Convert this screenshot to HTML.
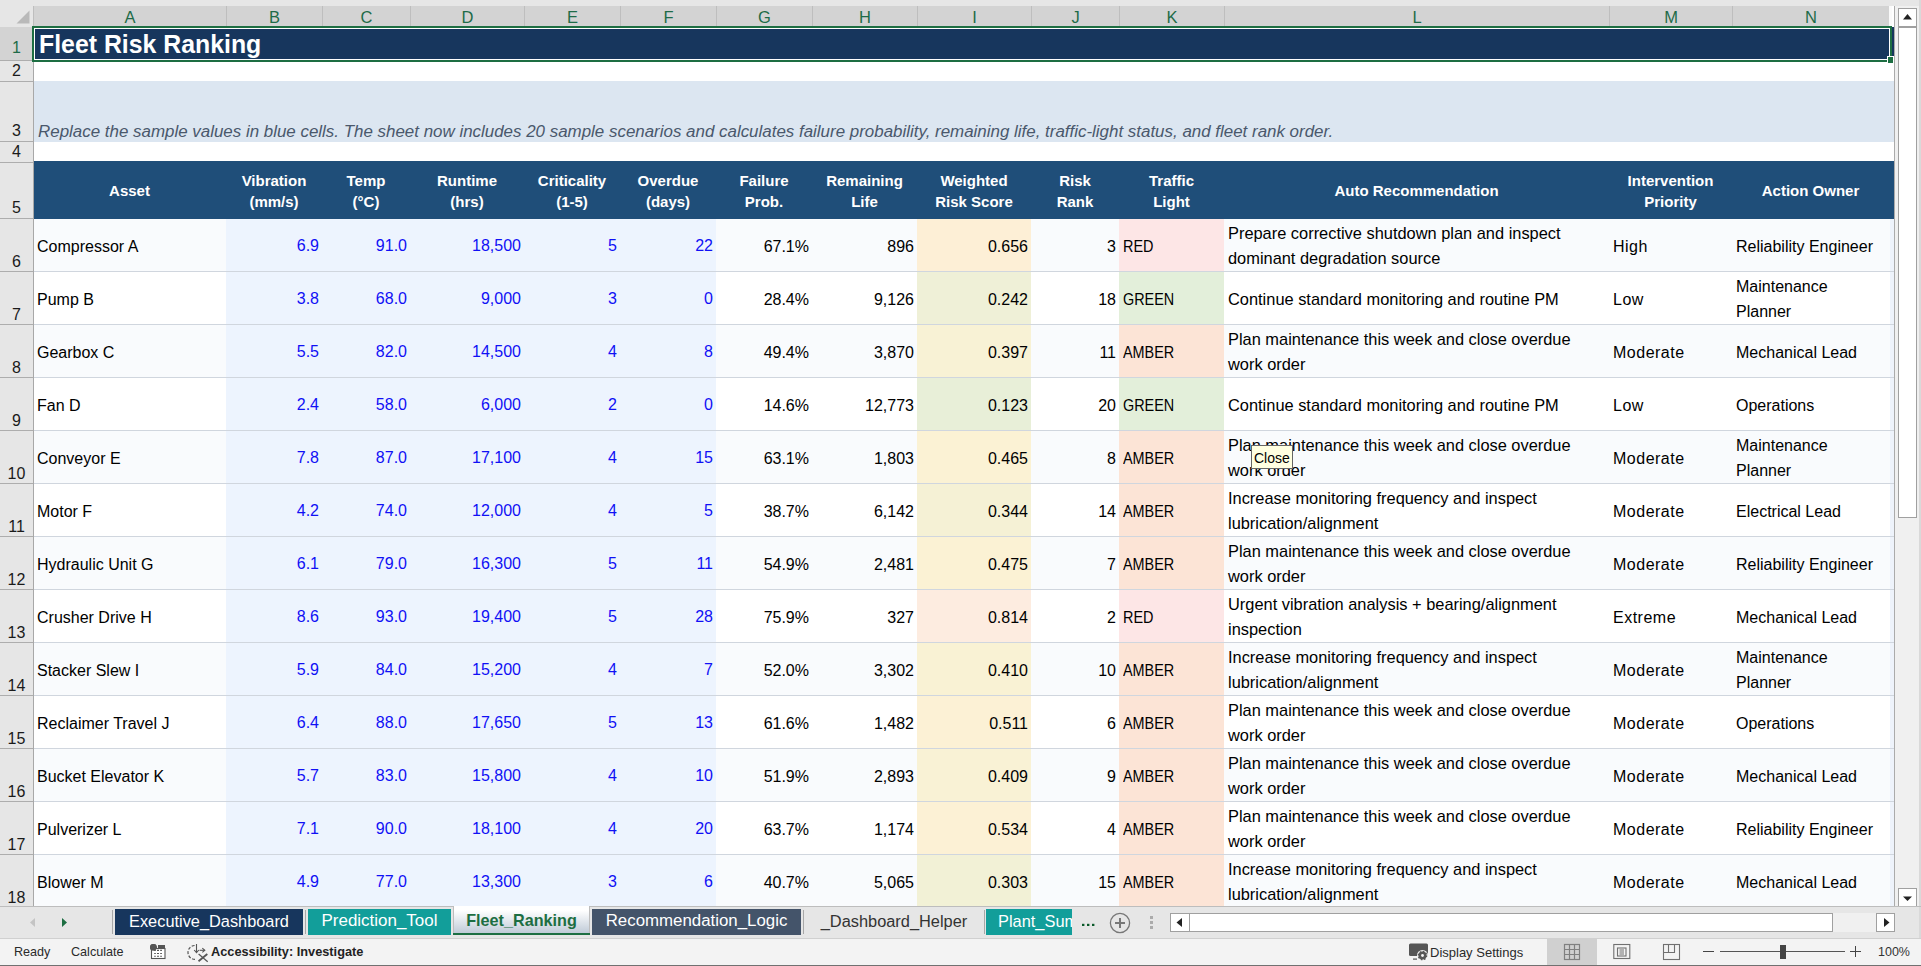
<!DOCTYPE html>
<html><head><meta charset="utf-8"><title>Fleet Risk Ranking</title>
<style>
*{margin:0;padding:0;box-sizing:border-box}
html,body{width:1921px;height:966px;overflow:hidden;background:#fff;font-family:"Liberation Sans",sans-serif}
.a{position:absolute}
.t{position:absolute;white-space:nowrap;line-height:1}
.ch{position:absolute;top:6px;height:20px;background:#D3D3D3;border-right:1px solid #BEBEBE;color:#1E6B48;font-size:16.5px;text-align:center;line-height:23px}
.rh{position:absolute;left:0;width:33px;background:#E6E6E6;border-bottom:1px solid #ADADAD}
</style></head><body>

<div class="a" style="left:0px;top:0px;width:1921px;height:6px;background:#E6E6E6;"></div>
<div class="a" style="left:0px;top:6px;width:33px;height:21px;background:#E6E6E6;"></div>
<svg class="a" style="left:0;top:0" width="33" height="27"><polygon points="29.5,10.5 29.5,23.5 16.5,23.5" fill="#B9B9B9"/></svg>
<div class="ch" style="left:34px;width:193px">A</div>
<div class="ch" style="left:227px;width:96px">B</div>
<div class="ch" style="left:323px;width:88px">C</div>
<div class="ch" style="left:411px;width:114px">D</div>
<div class="ch" style="left:525px;width:96px">E</div>
<div class="ch" style="left:621px;width:96px">F</div>
<div class="ch" style="left:717px;width:96px">G</div>
<div class="ch" style="left:813px;width:105px">H</div>
<div class="ch" style="left:918px;width:114px">I</div>
<div class="ch" style="left:1032px;width:88px">J</div>
<div class="ch" style="left:1120px;width:105px">K</div>
<div class="ch" style="left:1225px;width:385px">L</div>
<div class="ch" style="left:1610px;width:123px">M</div>
<div class="ch" style="left:1733px;width:157px">N</div>
<div class="a" style="left:33px;top:6px;width:1px;height:20px;background:#BEBEBE;"></div>
<div class="a" style="left:1889px;top:6px;width:3px;height:20px;background:#FAFAFA;"></div>
<div class="rh" style="top:27px;height:34px;background:#D3D3D3"></div>
<div class="t" style="left:0;width:33px;text-align:center;top:40px;font-size:16px;color:#1E6B48">1</div>
<div class="rh" style="top:61px;height:21px;background:#E6E6E6"></div>
<div class="t" style="left:0;width:33px;text-align:center;top:63px;font-size:16px;color:#1a1a1a">2</div>
<div class="rh" style="top:82px;height:60px;background:#E6E6E6"></div>
<div class="t" style="left:0;width:33px;text-align:center;top:123px;font-size:16px;color:#1a1a1a">3</div>
<div class="rh" style="top:142px;height:21px;background:#E6E6E6"></div>
<div class="t" style="left:0;width:33px;text-align:center;top:144px;font-size:16px;color:#1a1a1a">4</div>
<div class="rh" style="top:163px;height:56px;background:#E6E6E6"></div>
<div class="t" style="left:0;width:33px;text-align:center;top:200px;font-size:16px;color:#1a1a1a">5</div>
<div class="rh" style="top:219px;height:53px;background:#E6E6E6"></div>
<div class="t" style="left:0;width:33px;text-align:center;top:253.5px;font-size:16px;color:#1a1a1a">6</div>
<div class="rh" style="top:272px;height:53px;background:#E6E6E6"></div>
<div class="t" style="left:0;width:33px;text-align:center;top:306.5px;font-size:16px;color:#1a1a1a">7</div>
<div class="rh" style="top:325px;height:53px;background:#E6E6E6"></div>
<div class="t" style="left:0;width:33px;text-align:center;top:359.5px;font-size:16px;color:#1a1a1a">8</div>
<div class="rh" style="top:378px;height:53px;background:#E6E6E6"></div>
<div class="t" style="left:0;width:33px;text-align:center;top:412.5px;font-size:16px;color:#1a1a1a">9</div>
<div class="rh" style="top:431px;height:53px;background:#E6E6E6"></div>
<div class="t" style="left:0;width:33px;text-align:center;top:465.5px;font-size:16px;color:#1a1a1a">10</div>
<div class="rh" style="top:484px;height:53px;background:#E6E6E6"></div>
<div class="t" style="left:0;width:33px;text-align:center;top:518.5px;font-size:16px;color:#1a1a1a">11</div>
<div class="rh" style="top:537px;height:53px;background:#E6E6E6"></div>
<div class="t" style="left:0;width:33px;text-align:center;top:571.5px;font-size:16px;color:#1a1a1a">12</div>
<div class="rh" style="top:590px;height:53px;background:#E6E6E6"></div>
<div class="t" style="left:0;width:33px;text-align:center;top:624.5px;font-size:16px;color:#1a1a1a">13</div>
<div class="rh" style="top:643px;height:53px;background:#E6E6E6"></div>
<div class="t" style="left:0;width:33px;text-align:center;top:677.5px;font-size:16px;color:#1a1a1a">14</div>
<div class="rh" style="top:696px;height:53px;background:#E6E6E6"></div>
<div class="t" style="left:0;width:33px;text-align:center;top:730.5px;font-size:16px;color:#1a1a1a">15</div>
<div class="rh" style="top:749px;height:53px;background:#E6E6E6"></div>
<div class="t" style="left:0;width:33px;text-align:center;top:783.5px;font-size:16px;color:#1a1a1a">16</div>
<div class="rh" style="top:802px;height:53px;background:#E6E6E6"></div>
<div class="t" style="left:0;width:33px;text-align:center;top:836.5px;font-size:16px;color:#1a1a1a">17</div>
<div class="rh" style="top:855px;height:53px;background:#E6E6E6"></div>
<div class="t" style="left:0;width:33px;text-align:center;top:889.5px;font-size:16px;color:#1a1a1a">18</div>
<div class="a" style="left:33px;top:26px;width:1px;height:881px;background:#A8A8A8;"></div>
<div class="a" style="left:34px;top:26px;width:1860px;height:35px;background:#FFFFFF;"></div>
<div class="a" style="left:35px;top:29px;width:1854px;height:30px;background:#17365D;"></div>
<div class="a" style="left:1892px;top:27px;width:2px;height:34px;background:#17365D;"></div>
<div class="t" style="left:39px;top:33px;font-size:24.85px;font-weight:bold;color:#fff">Fleet Risk Ranking</div>
<div class="a" style="left:32px;top:26px;width:1860px;height:2px;background:#1D6E42;"></div>
<div class="a" style="left:32px;top:60px;width:1860px;height:2px;background:#1D6E42;"></div>
<div class="a" style="left:32px;top:26px;width:2px;height:36px;background:#1D6E42;"></div>
<div class="a" style="left:1890px;top:26px;width:2px;height:36px;background:#1D6E42;"></div>
<div class="a" style="left:1887px;top:56px;width:7px;height:7px;background:#FFFFFF;"></div>
<div class="a" style="left:1888px;top:57px;width:5px;height:6px;background:#1D6E42;"></div>
<div class="a" style="left:34px;top:81px;width:1860px;height:61px;background:#DCE6F1;"></div>
<div class="t" style="left:38px;top:124px;font-size:16.93px;font-style:italic;color:#4A586C">Replace the sample values in blue cells. The sheet now includes 20 sample scenarios and calculates failure probability, remaining life, traffic-light status, and fleet rank order.</div>
<div class="a" style="left:34px;top:161px;width:1860px;height:58px;background:#1F4E79;"></div>
<div class="t" style="left:33px;width:193px;text-align:center;top:183px;font-size:15px;font-weight:bold;color:#fff">Asset</div>
<div class="t" style="left:226px;width:96px;text-align:center;top:173px;font-size:15px;font-weight:bold;color:#fff">Vibration</div>
<div class="t" style="left:226px;width:96px;text-align:center;top:194px;font-size:15px;font-weight:bold;color:#fff">(mm/s)</div>
<div class="t" style="left:322px;width:88px;text-align:center;top:173px;font-size:15px;font-weight:bold;color:#fff">Temp</div>
<div class="t" style="left:322px;width:88px;text-align:center;top:194px;font-size:15px;font-weight:bold;color:#fff">(°C)</div>
<div class="t" style="left:410px;width:114px;text-align:center;top:173px;font-size:15px;font-weight:bold;color:#fff">Runtime</div>
<div class="t" style="left:410px;width:114px;text-align:center;top:194px;font-size:15px;font-weight:bold;color:#fff">(hrs)</div>
<div class="t" style="left:524px;width:96px;text-align:center;top:173px;font-size:15px;font-weight:bold;color:#fff">Criticality</div>
<div class="t" style="left:524px;width:96px;text-align:center;top:194px;font-size:15px;font-weight:bold;color:#fff">(1-5)</div>
<div class="t" style="left:620px;width:96px;text-align:center;top:173px;font-size:15px;font-weight:bold;color:#fff">Overdue</div>
<div class="t" style="left:620px;width:96px;text-align:center;top:194px;font-size:15px;font-weight:bold;color:#fff">(days)</div>
<div class="t" style="left:716px;width:96px;text-align:center;top:173px;font-size:15px;font-weight:bold;color:#fff">Failure</div>
<div class="t" style="left:716px;width:96px;text-align:center;top:194px;font-size:15px;font-weight:bold;color:#fff">Prob.</div>
<div class="t" style="left:812px;width:105px;text-align:center;top:173px;font-size:15px;font-weight:bold;color:#fff">Remaining</div>
<div class="t" style="left:812px;width:105px;text-align:center;top:194px;font-size:15px;font-weight:bold;color:#fff">Life</div>
<div class="t" style="left:917px;width:114px;text-align:center;top:173px;font-size:15px;font-weight:bold;color:#fff">Weighted</div>
<div class="t" style="left:917px;width:114px;text-align:center;top:194px;font-size:15px;font-weight:bold;color:#fff">Risk Score</div>
<div class="t" style="left:1031px;width:88px;text-align:center;top:173px;font-size:15px;font-weight:bold;color:#fff">Risk</div>
<div class="t" style="left:1031px;width:88px;text-align:center;top:194px;font-size:15px;font-weight:bold;color:#fff">Rank</div>
<div class="t" style="left:1119px;width:105px;text-align:center;top:173px;font-size:15px;font-weight:bold;color:#fff">Traffic</div>
<div class="t" style="left:1119px;width:105px;text-align:center;top:194px;font-size:15px;font-weight:bold;color:#fff">Light</div>
<div class="t" style="left:1224px;width:385px;text-align:center;top:183px;font-size:15px;font-weight:bold;color:#fff">Auto Recommendation</div>
<div class="t" style="left:1609px;width:123px;text-align:center;top:173px;font-size:15px;font-weight:bold;color:#fff">Intervention</div>
<div class="t" style="left:1609px;width:123px;text-align:center;top:194px;font-size:15px;font-weight:bold;color:#fff">Priority</div>
<div class="t" style="left:1732px;width:157px;text-align:center;top:183px;font-size:15px;font-weight:bold;color:#fff">Action Owner</div>
<div class="a" style="left:34px;top:219px;width:192px;height:52px;background:#F9FBFD;"></div>
<div class="a" style="left:226px;top:219px;width:96px;height:52px;background:#EDF4FE;"></div>
<div class="a" style="left:322px;top:219px;width:88px;height:52px;background:#EDF4FE;"></div>
<div class="a" style="left:410px;top:219px;width:114px;height:52px;background:#EDF4FE;"></div>
<div class="a" style="left:524px;top:219px;width:96px;height:52px;background:#EDF4FE;"></div>
<div class="a" style="left:620px;top:219px;width:96px;height:52px;background:#EDF4FE;"></div>
<div class="a" style="left:716px;top:219px;width:96px;height:52px;background:#F9FBFD;"></div>
<div class="a" style="left:812px;top:219px;width:105px;height:52px;background:#F9FBFD;"></div>
<div class="a" style="left:917px;top:219px;width:114px;height:52px;background:#FDEFD6;"></div>
<div class="a" style="left:1031px;top:219px;width:88px;height:52px;background:#F9FBFD;"></div>
<div class="a" style="left:1119px;top:219px;width:105px;height:52px;background:#FDE6E6;"></div>
<div class="a" style="left:1224px;top:219px;width:385px;height:52px;background:#F9FBFD;"></div>
<div class="a" style="left:1609px;top:219px;width:123px;height:52px;background:#F9FBFD;"></div>
<div class="a" style="left:1732px;top:219px;width:162px;height:52px;background:#F9FBFD;"></div>
<div class="a" style="left:1890px;top:219px;width:4px;height:52px;background:#EEF3FB;"></div>
<div class="a" style="left:34px;top:271px;width:1860px;height:1px;background:#D0D6DE;"></div>
<div class="t" style="left:37px;top:238.5px;font-size:16px;color:#000">Compressor A</div>
<div class="t" style="right:1602px;top:237.5px;font-size:16px;color:#1010F5">6.9</div>
<div class="t" style="right:1514px;top:237.5px;font-size:16px;color:#1010F5">91.0</div>
<div class="t" style="right:1400px;top:237.5px;font-size:16px;color:#1010F5">18,500</div>
<div class="t" style="right:1304px;top:237.5px;font-size:16px;color:#1010F5">5</div>
<div class="t" style="right:1208px;top:237.5px;font-size:16px;color:#1010F5">22</div>
<div class="t" style="right:1112px;top:238.5px;font-size:16px;color:#000">67.1%</div>
<div class="t" style="right:1007px;top:238.5px;font-size:16px;color:#000">896</div>
<div class="t" style="right:893px;top:238.5px;font-size:16px;color:#000">0.656</div>
<div class="t" style="right:805px;top:238.5px;font-size:16px;color:#000">3</div>
<div class="t" style="left:1123px;top:238.5px;font-size:16px;color:#000;transform:scaleX(0.9);transform-origin:0 0">RED</div>
<div class="t" style="left:1228px;top:225.1px;font-size:16.4px;color:#000">Prepare corrective shutdown plan and inspect</div>
<div class="t" style="left:1228px;top:250.1px;font-size:16.4px;color:#000">dominant degradation source</div>
<div class="t" style="left:1613px;top:238.5px;font-size:16px;color:#000;letter-spacing:0.5px">High</div>
<div class="t" style="left:1736px;top:238.5px;font-size:16px;color:#000">Reliability Engineer</div>
<div class="a" style="left:34px;top:272px;width:192px;height:52px;background:#FFFFFF;"></div>
<div class="a" style="left:226px;top:272px;width:96px;height:52px;background:#EDF4FE;"></div>
<div class="a" style="left:322px;top:272px;width:88px;height:52px;background:#EDF4FE;"></div>
<div class="a" style="left:410px;top:272px;width:114px;height:52px;background:#EDF4FE;"></div>
<div class="a" style="left:524px;top:272px;width:96px;height:52px;background:#EDF4FE;"></div>
<div class="a" style="left:620px;top:272px;width:96px;height:52px;background:#EDF4FE;"></div>
<div class="a" style="left:716px;top:272px;width:96px;height:52px;background:#FFFFFF;"></div>
<div class="a" style="left:812px;top:272px;width:105px;height:52px;background:#FFFFFF;"></div>
<div class="a" style="left:917px;top:272px;width:114px;height:52px;background:#EFF0D7;"></div>
<div class="a" style="left:1031px;top:272px;width:88px;height:52px;background:#FFFFFF;"></div>
<div class="a" style="left:1119px;top:272px;width:105px;height:52px;background:#E3EFDA;"></div>
<div class="a" style="left:1224px;top:272px;width:385px;height:52px;background:#FFFFFF;"></div>
<div class="a" style="left:1609px;top:272px;width:123px;height:52px;background:#FFFFFF;"></div>
<div class="a" style="left:1732px;top:272px;width:162px;height:52px;background:#FFFFFF;"></div>
<div class="a" style="left:1890px;top:272px;width:4px;height:52px;background:#EEF3FB;"></div>
<div class="a" style="left:34px;top:324px;width:1860px;height:1px;background:#D0D6DE;"></div>
<div class="t" style="left:37px;top:291.5px;font-size:16px;color:#000">Pump B</div>
<div class="t" style="right:1602px;top:290.5px;font-size:16px;color:#1010F5">3.8</div>
<div class="t" style="right:1514px;top:290.5px;font-size:16px;color:#1010F5">68.0</div>
<div class="t" style="right:1400px;top:290.5px;font-size:16px;color:#1010F5">9,000</div>
<div class="t" style="right:1304px;top:290.5px;font-size:16px;color:#1010F5">3</div>
<div class="t" style="right:1208px;top:290.5px;font-size:16px;color:#1010F5">0</div>
<div class="t" style="right:1112px;top:291.5px;font-size:16px;color:#000">28.4%</div>
<div class="t" style="right:1007px;top:291.5px;font-size:16px;color:#000">9,126</div>
<div class="t" style="right:893px;top:291.5px;font-size:16px;color:#000">0.242</div>
<div class="t" style="right:805px;top:291.5px;font-size:16px;color:#000">18</div>
<div class="t" style="left:1123px;top:291.5px;font-size:16px;color:#000;transform:scaleX(0.9);transform-origin:0 0">GREEN</div>
<div class="t" style="left:1228px;top:290.6px;font-size:16.4px;color:#000">Continue standard monitoring and routine PM</div>
<div class="t" style="left:1613px;top:291.5px;font-size:16px;color:#000;letter-spacing:0.5px">Low</div>
<div class="t" style="left:1736px;top:279.0px;font-size:16px;color:#000">Maintenance</div>
<div class="t" style="left:1736px;top:304.0px;font-size:16px;color:#000">Planner</div>
<div class="a" style="left:34px;top:325px;width:192px;height:52px;background:#F9FBFD;"></div>
<div class="a" style="left:226px;top:325px;width:96px;height:52px;background:#EDF4FE;"></div>
<div class="a" style="left:322px;top:325px;width:88px;height:52px;background:#EDF4FE;"></div>
<div class="a" style="left:410px;top:325px;width:114px;height:52px;background:#EDF4FE;"></div>
<div class="a" style="left:524px;top:325px;width:96px;height:52px;background:#EDF4FE;"></div>
<div class="a" style="left:620px;top:325px;width:96px;height:52px;background:#EDF4FE;"></div>
<div class="a" style="left:716px;top:325px;width:96px;height:52px;background:#F9FBFD;"></div>
<div class="a" style="left:812px;top:325px;width:105px;height:52px;background:#F9FBFD;"></div>
<div class="a" style="left:917px;top:325px;width:114px;height:52px;background:#F8F2D5;"></div>
<div class="a" style="left:1031px;top:325px;width:88px;height:52px;background:#F9FBFD;"></div>
<div class="a" style="left:1119px;top:325px;width:105px;height:52px;background:#FCE4D6;"></div>
<div class="a" style="left:1224px;top:325px;width:385px;height:52px;background:#F9FBFD;"></div>
<div class="a" style="left:1609px;top:325px;width:123px;height:52px;background:#F9FBFD;"></div>
<div class="a" style="left:1732px;top:325px;width:162px;height:52px;background:#F9FBFD;"></div>
<div class="a" style="left:1890px;top:325px;width:4px;height:52px;background:#EEF3FB;"></div>
<div class="a" style="left:34px;top:377px;width:1860px;height:1px;background:#D0D6DE;"></div>
<div class="t" style="left:37px;top:344.5px;font-size:16px;color:#000">Gearbox C</div>
<div class="t" style="right:1602px;top:343.5px;font-size:16px;color:#1010F5">5.5</div>
<div class="t" style="right:1514px;top:343.5px;font-size:16px;color:#1010F5">82.0</div>
<div class="t" style="right:1400px;top:343.5px;font-size:16px;color:#1010F5">14,500</div>
<div class="t" style="right:1304px;top:343.5px;font-size:16px;color:#1010F5">4</div>
<div class="t" style="right:1208px;top:343.5px;font-size:16px;color:#1010F5">8</div>
<div class="t" style="right:1112px;top:344.5px;font-size:16px;color:#000">49.4%</div>
<div class="t" style="right:1007px;top:344.5px;font-size:16px;color:#000">3,870</div>
<div class="t" style="right:893px;top:344.5px;font-size:16px;color:#000">0.397</div>
<div class="t" style="right:805px;top:344.5px;font-size:16px;color:#000">11</div>
<div class="t" style="left:1123px;top:344.5px;font-size:16px;color:#000;transform:scaleX(0.9);transform-origin:0 0">AMBER</div>
<div class="t" style="left:1228px;top:331.1px;font-size:16.4px;color:#000">Plan maintenance this week and close overdue</div>
<div class="t" style="left:1228px;top:356.1px;font-size:16.4px;color:#000">work order</div>
<div class="t" style="left:1613px;top:344.5px;font-size:16px;color:#000;letter-spacing:0.5px">Moderate</div>
<div class="t" style="left:1736px;top:344.5px;font-size:16px;color:#000">Mechanical Lead</div>
<div class="a" style="left:34px;top:378px;width:192px;height:52px;background:#FFFFFF;"></div>
<div class="a" style="left:226px;top:378px;width:96px;height:52px;background:#EDF4FE;"></div>
<div class="a" style="left:322px;top:378px;width:88px;height:52px;background:#EDF4FE;"></div>
<div class="a" style="left:410px;top:378px;width:114px;height:52px;background:#EDF4FE;"></div>
<div class="a" style="left:524px;top:378px;width:96px;height:52px;background:#EDF4FE;"></div>
<div class="a" style="left:620px;top:378px;width:96px;height:52px;background:#EDF4FE;"></div>
<div class="a" style="left:716px;top:378px;width:96px;height:52px;background:#FFFFFF;"></div>
<div class="a" style="left:812px;top:378px;width:105px;height:52px;background:#FFFFFF;"></div>
<div class="a" style="left:917px;top:378px;width:114px;height:52px;background:#E8EFD8;"></div>
<div class="a" style="left:1031px;top:378px;width:88px;height:52px;background:#FFFFFF;"></div>
<div class="a" style="left:1119px;top:378px;width:105px;height:52px;background:#E3EFDA;"></div>
<div class="a" style="left:1224px;top:378px;width:385px;height:52px;background:#FFFFFF;"></div>
<div class="a" style="left:1609px;top:378px;width:123px;height:52px;background:#FFFFFF;"></div>
<div class="a" style="left:1732px;top:378px;width:162px;height:52px;background:#FFFFFF;"></div>
<div class="a" style="left:1890px;top:378px;width:4px;height:52px;background:#EEF3FB;"></div>
<div class="a" style="left:34px;top:430px;width:1860px;height:1px;background:#D0D6DE;"></div>
<div class="t" style="left:37px;top:397.5px;font-size:16px;color:#000">Fan D</div>
<div class="t" style="right:1602px;top:396.5px;font-size:16px;color:#1010F5">2.4</div>
<div class="t" style="right:1514px;top:396.5px;font-size:16px;color:#1010F5">58.0</div>
<div class="t" style="right:1400px;top:396.5px;font-size:16px;color:#1010F5">6,000</div>
<div class="t" style="right:1304px;top:396.5px;font-size:16px;color:#1010F5">2</div>
<div class="t" style="right:1208px;top:396.5px;font-size:16px;color:#1010F5">0</div>
<div class="t" style="right:1112px;top:397.5px;font-size:16px;color:#000">14.6%</div>
<div class="t" style="right:1007px;top:397.5px;font-size:16px;color:#000">12,773</div>
<div class="t" style="right:893px;top:397.5px;font-size:16px;color:#000">0.123</div>
<div class="t" style="right:805px;top:397.5px;font-size:16px;color:#000">20</div>
<div class="t" style="left:1123px;top:397.5px;font-size:16px;color:#000;transform:scaleX(0.9);transform-origin:0 0">GREEN</div>
<div class="t" style="left:1228px;top:396.6px;font-size:16.4px;color:#000">Continue standard monitoring and routine PM</div>
<div class="t" style="left:1613px;top:397.5px;font-size:16px;color:#000;letter-spacing:0.5px">Low</div>
<div class="t" style="left:1736px;top:397.5px;font-size:16px;color:#000">Operations</div>
<div class="a" style="left:34px;top:431px;width:192px;height:52px;background:#F9FBFD;"></div>
<div class="a" style="left:226px;top:431px;width:96px;height:52px;background:#EDF4FE;"></div>
<div class="a" style="left:322px;top:431px;width:88px;height:52px;background:#EDF4FE;"></div>
<div class="a" style="left:410px;top:431px;width:114px;height:52px;background:#EDF4FE;"></div>
<div class="a" style="left:524px;top:431px;width:96px;height:52px;background:#EDF4FE;"></div>
<div class="a" style="left:620px;top:431px;width:96px;height:52px;background:#EDF4FE;"></div>
<div class="a" style="left:716px;top:431px;width:96px;height:52px;background:#F9FBFD;"></div>
<div class="a" style="left:812px;top:431px;width:105px;height:52px;background:#F9FBFD;"></div>
<div class="a" style="left:917px;top:431px;width:114px;height:52px;background:#FBF2D4;"></div>
<div class="a" style="left:1031px;top:431px;width:88px;height:52px;background:#F9FBFD;"></div>
<div class="a" style="left:1119px;top:431px;width:105px;height:52px;background:#FCE4D6;"></div>
<div class="a" style="left:1224px;top:431px;width:385px;height:52px;background:#F9FBFD;"></div>
<div class="a" style="left:1609px;top:431px;width:123px;height:52px;background:#F9FBFD;"></div>
<div class="a" style="left:1732px;top:431px;width:162px;height:52px;background:#F9FBFD;"></div>
<div class="a" style="left:1890px;top:431px;width:4px;height:52px;background:#EEF3FB;"></div>
<div class="a" style="left:34px;top:483px;width:1860px;height:1px;background:#D0D6DE;"></div>
<div class="t" style="left:37px;top:450.5px;font-size:16px;color:#000">Conveyor E</div>
<div class="t" style="right:1602px;top:449.5px;font-size:16px;color:#1010F5">7.8</div>
<div class="t" style="right:1514px;top:449.5px;font-size:16px;color:#1010F5">87.0</div>
<div class="t" style="right:1400px;top:449.5px;font-size:16px;color:#1010F5">17,100</div>
<div class="t" style="right:1304px;top:449.5px;font-size:16px;color:#1010F5">4</div>
<div class="t" style="right:1208px;top:449.5px;font-size:16px;color:#1010F5">15</div>
<div class="t" style="right:1112px;top:450.5px;font-size:16px;color:#000">63.1%</div>
<div class="t" style="right:1007px;top:450.5px;font-size:16px;color:#000">1,803</div>
<div class="t" style="right:893px;top:450.5px;font-size:16px;color:#000">0.465</div>
<div class="t" style="right:805px;top:450.5px;font-size:16px;color:#000">8</div>
<div class="t" style="left:1123px;top:450.5px;font-size:16px;color:#000;transform:scaleX(0.9);transform-origin:0 0">AMBER</div>
<div class="t" style="left:1228px;top:437.1px;font-size:16.4px;color:#000">Plan maintenance this week and close overdue</div>
<div class="t" style="left:1228px;top:462.1px;font-size:16.4px;color:#000">work order</div>
<div class="t" style="left:1613px;top:450.5px;font-size:16px;color:#000;letter-spacing:0.5px">Moderate</div>
<div class="t" style="left:1736px;top:438.0px;font-size:16px;color:#000">Maintenance</div>
<div class="t" style="left:1736px;top:463.0px;font-size:16px;color:#000">Planner</div>
<div class="a" style="left:34px;top:484px;width:192px;height:52px;background:#FFFFFF;"></div>
<div class="a" style="left:226px;top:484px;width:96px;height:52px;background:#EDF4FE;"></div>
<div class="a" style="left:322px;top:484px;width:88px;height:52px;background:#EDF4FE;"></div>
<div class="a" style="left:410px;top:484px;width:114px;height:52px;background:#EDF4FE;"></div>
<div class="a" style="left:524px;top:484px;width:96px;height:52px;background:#EDF4FE;"></div>
<div class="a" style="left:620px;top:484px;width:96px;height:52px;background:#EDF4FE;"></div>
<div class="a" style="left:716px;top:484px;width:96px;height:52px;background:#FFFFFF;"></div>
<div class="a" style="left:812px;top:484px;width:105px;height:52px;background:#FFFFFF;"></div>
<div class="a" style="left:917px;top:484px;width:114px;height:52px;background:#F5F1D5;"></div>
<div class="a" style="left:1031px;top:484px;width:88px;height:52px;background:#FFFFFF;"></div>
<div class="a" style="left:1119px;top:484px;width:105px;height:52px;background:#FCE4D6;"></div>
<div class="a" style="left:1224px;top:484px;width:385px;height:52px;background:#FFFFFF;"></div>
<div class="a" style="left:1609px;top:484px;width:123px;height:52px;background:#FFFFFF;"></div>
<div class="a" style="left:1732px;top:484px;width:162px;height:52px;background:#FFFFFF;"></div>
<div class="a" style="left:1890px;top:484px;width:4px;height:52px;background:#EEF3FB;"></div>
<div class="a" style="left:34px;top:536px;width:1860px;height:1px;background:#D0D6DE;"></div>
<div class="t" style="left:37px;top:503.5px;font-size:16px;color:#000">Motor F</div>
<div class="t" style="right:1602px;top:502.5px;font-size:16px;color:#1010F5">4.2</div>
<div class="t" style="right:1514px;top:502.5px;font-size:16px;color:#1010F5">74.0</div>
<div class="t" style="right:1400px;top:502.5px;font-size:16px;color:#1010F5">12,000</div>
<div class="t" style="right:1304px;top:502.5px;font-size:16px;color:#1010F5">4</div>
<div class="t" style="right:1208px;top:502.5px;font-size:16px;color:#1010F5">5</div>
<div class="t" style="right:1112px;top:503.5px;font-size:16px;color:#000">38.7%</div>
<div class="t" style="right:1007px;top:503.5px;font-size:16px;color:#000">6,142</div>
<div class="t" style="right:893px;top:503.5px;font-size:16px;color:#000">0.344</div>
<div class="t" style="right:805px;top:503.5px;font-size:16px;color:#000">14</div>
<div class="t" style="left:1123px;top:503.5px;font-size:16px;color:#000;transform:scaleX(0.9);transform-origin:0 0">AMBER</div>
<div class="t" style="left:1228px;top:490.1px;font-size:16.4px;color:#000">Increase monitoring frequency and inspect</div>
<div class="t" style="left:1228px;top:515.1px;font-size:16.4px;color:#000">lubrication/alignment</div>
<div class="t" style="left:1613px;top:503.5px;font-size:16px;color:#000;letter-spacing:0.5px">Moderate</div>
<div class="t" style="left:1736px;top:503.5px;font-size:16px;color:#000">Electrical Lead</div>
<div class="a" style="left:34px;top:537px;width:192px;height:52px;background:#F9FBFD;"></div>
<div class="a" style="left:226px;top:537px;width:96px;height:52px;background:#EDF4FE;"></div>
<div class="a" style="left:322px;top:537px;width:88px;height:52px;background:#EDF4FE;"></div>
<div class="a" style="left:410px;top:537px;width:114px;height:52px;background:#EDF4FE;"></div>
<div class="a" style="left:524px;top:537px;width:96px;height:52px;background:#EDF4FE;"></div>
<div class="a" style="left:620px;top:537px;width:96px;height:52px;background:#EDF4FE;"></div>
<div class="a" style="left:716px;top:537px;width:96px;height:52px;background:#F9FBFD;"></div>
<div class="a" style="left:812px;top:537px;width:105px;height:52px;background:#F9FBFD;"></div>
<div class="a" style="left:917px;top:537px;width:114px;height:52px;background:#FBF2D4;"></div>
<div class="a" style="left:1031px;top:537px;width:88px;height:52px;background:#F9FBFD;"></div>
<div class="a" style="left:1119px;top:537px;width:105px;height:52px;background:#FCE4D6;"></div>
<div class="a" style="left:1224px;top:537px;width:385px;height:52px;background:#F9FBFD;"></div>
<div class="a" style="left:1609px;top:537px;width:123px;height:52px;background:#F9FBFD;"></div>
<div class="a" style="left:1732px;top:537px;width:162px;height:52px;background:#F9FBFD;"></div>
<div class="a" style="left:1890px;top:537px;width:4px;height:52px;background:#EEF3FB;"></div>
<div class="a" style="left:34px;top:589px;width:1860px;height:1px;background:#D0D6DE;"></div>
<div class="t" style="left:37px;top:556.5px;font-size:16px;color:#000">Hydraulic Unit G</div>
<div class="t" style="right:1602px;top:555.5px;font-size:16px;color:#1010F5">6.1</div>
<div class="t" style="right:1514px;top:555.5px;font-size:16px;color:#1010F5">79.0</div>
<div class="t" style="right:1400px;top:555.5px;font-size:16px;color:#1010F5">16,300</div>
<div class="t" style="right:1304px;top:555.5px;font-size:16px;color:#1010F5">5</div>
<div class="t" style="right:1208px;top:555.5px;font-size:16px;color:#1010F5">11</div>
<div class="t" style="right:1112px;top:556.5px;font-size:16px;color:#000">54.9%</div>
<div class="t" style="right:1007px;top:556.5px;font-size:16px;color:#000">2,481</div>
<div class="t" style="right:893px;top:556.5px;font-size:16px;color:#000">0.475</div>
<div class="t" style="right:805px;top:556.5px;font-size:16px;color:#000">7</div>
<div class="t" style="left:1123px;top:556.5px;font-size:16px;color:#000;transform:scaleX(0.9);transform-origin:0 0">AMBER</div>
<div class="t" style="left:1228px;top:543.1px;font-size:16.4px;color:#000">Plan maintenance this week and close overdue</div>
<div class="t" style="left:1228px;top:568.1px;font-size:16.4px;color:#000">work order</div>
<div class="t" style="left:1613px;top:556.5px;font-size:16px;color:#000;letter-spacing:0.5px">Moderate</div>
<div class="t" style="left:1736px;top:556.5px;font-size:16px;color:#000">Reliability Engineer</div>
<div class="a" style="left:34px;top:590px;width:192px;height:52px;background:#FFFFFF;"></div>
<div class="a" style="left:226px;top:590px;width:96px;height:52px;background:#EDF4FE;"></div>
<div class="a" style="left:322px;top:590px;width:88px;height:52px;background:#EDF4FE;"></div>
<div class="a" style="left:410px;top:590px;width:114px;height:52px;background:#EDF4FE;"></div>
<div class="a" style="left:524px;top:590px;width:96px;height:52px;background:#EDF4FE;"></div>
<div class="a" style="left:620px;top:590px;width:96px;height:52px;background:#EDF4FE;"></div>
<div class="a" style="left:716px;top:590px;width:96px;height:52px;background:#FFFFFF;"></div>
<div class="a" style="left:812px;top:590px;width:105px;height:52px;background:#FFFFFF;"></div>
<div class="a" style="left:917px;top:590px;width:114px;height:52px;background:#FDECE0;"></div>
<div class="a" style="left:1031px;top:590px;width:88px;height:52px;background:#FFFFFF;"></div>
<div class="a" style="left:1119px;top:590px;width:105px;height:52px;background:#FDE6E6;"></div>
<div class="a" style="left:1224px;top:590px;width:385px;height:52px;background:#FFFFFF;"></div>
<div class="a" style="left:1609px;top:590px;width:123px;height:52px;background:#FFFFFF;"></div>
<div class="a" style="left:1732px;top:590px;width:162px;height:52px;background:#FFFFFF;"></div>
<div class="a" style="left:1890px;top:590px;width:4px;height:52px;background:#EEF3FB;"></div>
<div class="a" style="left:34px;top:642px;width:1860px;height:1px;background:#D0D6DE;"></div>
<div class="t" style="left:37px;top:609.5px;font-size:16px;color:#000">Crusher Drive H</div>
<div class="t" style="right:1602px;top:608.5px;font-size:16px;color:#1010F5">8.6</div>
<div class="t" style="right:1514px;top:608.5px;font-size:16px;color:#1010F5">93.0</div>
<div class="t" style="right:1400px;top:608.5px;font-size:16px;color:#1010F5">19,400</div>
<div class="t" style="right:1304px;top:608.5px;font-size:16px;color:#1010F5">5</div>
<div class="t" style="right:1208px;top:608.5px;font-size:16px;color:#1010F5">28</div>
<div class="t" style="right:1112px;top:609.5px;font-size:16px;color:#000">75.9%</div>
<div class="t" style="right:1007px;top:609.5px;font-size:16px;color:#000">327</div>
<div class="t" style="right:893px;top:609.5px;font-size:16px;color:#000">0.814</div>
<div class="t" style="right:805px;top:609.5px;font-size:16px;color:#000">2</div>
<div class="t" style="left:1123px;top:609.5px;font-size:16px;color:#000;transform:scaleX(0.9);transform-origin:0 0">RED</div>
<div class="t" style="left:1228px;top:596.1px;font-size:16.4px;color:#000">Urgent vibration analysis + bearing/alignment</div>
<div class="t" style="left:1228px;top:621.1px;font-size:16.4px;color:#000">inspection</div>
<div class="t" style="left:1613px;top:609.5px;font-size:16px;color:#000;letter-spacing:0.5px">Extreme</div>
<div class="t" style="left:1736px;top:609.5px;font-size:16px;color:#000">Mechanical Lead</div>
<div class="a" style="left:34px;top:643px;width:192px;height:52px;background:#F9FBFD;"></div>
<div class="a" style="left:226px;top:643px;width:96px;height:52px;background:#EDF4FE;"></div>
<div class="a" style="left:322px;top:643px;width:88px;height:52px;background:#EDF4FE;"></div>
<div class="a" style="left:410px;top:643px;width:114px;height:52px;background:#EDF4FE;"></div>
<div class="a" style="left:524px;top:643px;width:96px;height:52px;background:#EDF4FE;"></div>
<div class="a" style="left:620px;top:643px;width:96px;height:52px;background:#EDF4FE;"></div>
<div class="a" style="left:716px;top:643px;width:96px;height:52px;background:#F9FBFD;"></div>
<div class="a" style="left:812px;top:643px;width:105px;height:52px;background:#F9FBFD;"></div>
<div class="a" style="left:917px;top:643px;width:114px;height:52px;background:#F9F2D4;"></div>
<div class="a" style="left:1031px;top:643px;width:88px;height:52px;background:#F9FBFD;"></div>
<div class="a" style="left:1119px;top:643px;width:105px;height:52px;background:#FCE4D6;"></div>
<div class="a" style="left:1224px;top:643px;width:385px;height:52px;background:#F9FBFD;"></div>
<div class="a" style="left:1609px;top:643px;width:123px;height:52px;background:#F9FBFD;"></div>
<div class="a" style="left:1732px;top:643px;width:162px;height:52px;background:#F9FBFD;"></div>
<div class="a" style="left:1890px;top:643px;width:4px;height:52px;background:#EEF3FB;"></div>
<div class="a" style="left:34px;top:695px;width:1860px;height:1px;background:#D0D6DE;"></div>
<div class="t" style="left:37px;top:662.5px;font-size:16px;color:#000">Stacker Slew I</div>
<div class="t" style="right:1602px;top:661.5px;font-size:16px;color:#1010F5">5.9</div>
<div class="t" style="right:1514px;top:661.5px;font-size:16px;color:#1010F5">84.0</div>
<div class="t" style="right:1400px;top:661.5px;font-size:16px;color:#1010F5">15,200</div>
<div class="t" style="right:1304px;top:661.5px;font-size:16px;color:#1010F5">4</div>
<div class="t" style="right:1208px;top:661.5px;font-size:16px;color:#1010F5">7</div>
<div class="t" style="right:1112px;top:662.5px;font-size:16px;color:#000">52.0%</div>
<div class="t" style="right:1007px;top:662.5px;font-size:16px;color:#000">3,302</div>
<div class="t" style="right:893px;top:662.5px;font-size:16px;color:#000">0.410</div>
<div class="t" style="right:805px;top:662.5px;font-size:16px;color:#000">10</div>
<div class="t" style="left:1123px;top:662.5px;font-size:16px;color:#000;transform:scaleX(0.9);transform-origin:0 0">AMBER</div>
<div class="t" style="left:1228px;top:649.1px;font-size:16.4px;color:#000">Increase monitoring frequency and inspect</div>
<div class="t" style="left:1228px;top:674.1px;font-size:16.4px;color:#000">lubrication/alignment</div>
<div class="t" style="left:1613px;top:662.5px;font-size:16px;color:#000;letter-spacing:0.5px">Moderate</div>
<div class="t" style="left:1736px;top:650.0px;font-size:16px;color:#000">Maintenance</div>
<div class="t" style="left:1736px;top:675.0px;font-size:16px;color:#000">Planner</div>
<div class="a" style="left:34px;top:696px;width:192px;height:52px;background:#FFFFFF;"></div>
<div class="a" style="left:226px;top:696px;width:96px;height:52px;background:#EDF4FE;"></div>
<div class="a" style="left:322px;top:696px;width:88px;height:52px;background:#EDF4FE;"></div>
<div class="a" style="left:410px;top:696px;width:114px;height:52px;background:#EDF4FE;"></div>
<div class="a" style="left:524px;top:696px;width:96px;height:52px;background:#EDF4FE;"></div>
<div class="a" style="left:620px;top:696px;width:96px;height:52px;background:#EDF4FE;"></div>
<div class="a" style="left:716px;top:696px;width:96px;height:52px;background:#FFFFFF;"></div>
<div class="a" style="left:812px;top:696px;width:105px;height:52px;background:#FFFFFF;"></div>
<div class="a" style="left:917px;top:696px;width:114px;height:52px;background:#FCF1D5;"></div>
<div class="a" style="left:1031px;top:696px;width:88px;height:52px;background:#FFFFFF;"></div>
<div class="a" style="left:1119px;top:696px;width:105px;height:52px;background:#FCE4D6;"></div>
<div class="a" style="left:1224px;top:696px;width:385px;height:52px;background:#FFFFFF;"></div>
<div class="a" style="left:1609px;top:696px;width:123px;height:52px;background:#FFFFFF;"></div>
<div class="a" style="left:1732px;top:696px;width:162px;height:52px;background:#FFFFFF;"></div>
<div class="a" style="left:1890px;top:696px;width:4px;height:52px;background:#EEF3FB;"></div>
<div class="a" style="left:34px;top:748px;width:1860px;height:1px;background:#D0D6DE;"></div>
<div class="t" style="left:37px;top:715.5px;font-size:16px;color:#000">Reclaimer Travel J</div>
<div class="t" style="right:1602px;top:714.5px;font-size:16px;color:#1010F5">6.4</div>
<div class="t" style="right:1514px;top:714.5px;font-size:16px;color:#1010F5">88.0</div>
<div class="t" style="right:1400px;top:714.5px;font-size:16px;color:#1010F5">17,650</div>
<div class="t" style="right:1304px;top:714.5px;font-size:16px;color:#1010F5">5</div>
<div class="t" style="right:1208px;top:714.5px;font-size:16px;color:#1010F5">13</div>
<div class="t" style="right:1112px;top:715.5px;font-size:16px;color:#000">61.6%</div>
<div class="t" style="right:1007px;top:715.5px;font-size:16px;color:#000">1,482</div>
<div class="t" style="right:893px;top:715.5px;font-size:16px;color:#000">0.511</div>
<div class="t" style="right:805px;top:715.5px;font-size:16px;color:#000">6</div>
<div class="t" style="left:1123px;top:715.5px;font-size:16px;color:#000;transform:scaleX(0.9);transform-origin:0 0">AMBER</div>
<div class="t" style="left:1228px;top:702.1px;font-size:16.4px;color:#000">Plan maintenance this week and close overdue</div>
<div class="t" style="left:1228px;top:727.1px;font-size:16.4px;color:#000">work order</div>
<div class="t" style="left:1613px;top:715.5px;font-size:16px;color:#000;letter-spacing:0.5px">Moderate</div>
<div class="t" style="left:1736px;top:715.5px;font-size:16px;color:#000">Operations</div>
<div class="a" style="left:34px;top:749px;width:192px;height:52px;background:#F9FBFD;"></div>
<div class="a" style="left:226px;top:749px;width:96px;height:52px;background:#EDF4FE;"></div>
<div class="a" style="left:322px;top:749px;width:88px;height:52px;background:#EDF4FE;"></div>
<div class="a" style="left:410px;top:749px;width:114px;height:52px;background:#EDF4FE;"></div>
<div class="a" style="left:524px;top:749px;width:96px;height:52px;background:#EDF4FE;"></div>
<div class="a" style="left:620px;top:749px;width:96px;height:52px;background:#EDF4FE;"></div>
<div class="a" style="left:716px;top:749px;width:96px;height:52px;background:#F9FBFD;"></div>
<div class="a" style="left:812px;top:749px;width:105px;height:52px;background:#F9FBFD;"></div>
<div class="a" style="left:917px;top:749px;width:114px;height:52px;background:#F9F2D5;"></div>
<div class="a" style="left:1031px;top:749px;width:88px;height:52px;background:#F9FBFD;"></div>
<div class="a" style="left:1119px;top:749px;width:105px;height:52px;background:#FCE4D6;"></div>
<div class="a" style="left:1224px;top:749px;width:385px;height:52px;background:#F9FBFD;"></div>
<div class="a" style="left:1609px;top:749px;width:123px;height:52px;background:#F9FBFD;"></div>
<div class="a" style="left:1732px;top:749px;width:162px;height:52px;background:#F9FBFD;"></div>
<div class="a" style="left:1890px;top:749px;width:4px;height:52px;background:#EEF3FB;"></div>
<div class="a" style="left:34px;top:801px;width:1860px;height:1px;background:#D0D6DE;"></div>
<div class="t" style="left:37px;top:768.5px;font-size:16px;color:#000">Bucket Elevator K</div>
<div class="t" style="right:1602px;top:767.5px;font-size:16px;color:#1010F5">5.7</div>
<div class="t" style="right:1514px;top:767.5px;font-size:16px;color:#1010F5">83.0</div>
<div class="t" style="right:1400px;top:767.5px;font-size:16px;color:#1010F5">15,800</div>
<div class="t" style="right:1304px;top:767.5px;font-size:16px;color:#1010F5">4</div>
<div class="t" style="right:1208px;top:767.5px;font-size:16px;color:#1010F5">10</div>
<div class="t" style="right:1112px;top:768.5px;font-size:16px;color:#000">51.9%</div>
<div class="t" style="right:1007px;top:768.5px;font-size:16px;color:#000">2,893</div>
<div class="t" style="right:893px;top:768.5px;font-size:16px;color:#000">0.409</div>
<div class="t" style="right:805px;top:768.5px;font-size:16px;color:#000">9</div>
<div class="t" style="left:1123px;top:768.5px;font-size:16px;color:#000;transform:scaleX(0.9);transform-origin:0 0">AMBER</div>
<div class="t" style="left:1228px;top:755.1px;font-size:16.4px;color:#000">Plan maintenance this week and close overdue</div>
<div class="t" style="left:1228px;top:780.1px;font-size:16.4px;color:#000">work order</div>
<div class="t" style="left:1613px;top:768.5px;font-size:16px;color:#000;letter-spacing:0.5px">Moderate</div>
<div class="t" style="left:1736px;top:768.5px;font-size:16px;color:#000">Mechanical Lead</div>
<div class="a" style="left:34px;top:802px;width:192px;height:52px;background:#FFFFFF;"></div>
<div class="a" style="left:226px;top:802px;width:96px;height:52px;background:#EDF4FE;"></div>
<div class="a" style="left:322px;top:802px;width:88px;height:52px;background:#EDF4FE;"></div>
<div class="a" style="left:410px;top:802px;width:114px;height:52px;background:#EDF4FE;"></div>
<div class="a" style="left:524px;top:802px;width:96px;height:52px;background:#EDF4FE;"></div>
<div class="a" style="left:620px;top:802px;width:96px;height:52px;background:#EDF4FE;"></div>
<div class="a" style="left:716px;top:802px;width:96px;height:52px;background:#FFFFFF;"></div>
<div class="a" style="left:812px;top:802px;width:105px;height:52px;background:#FFFFFF;"></div>
<div class="a" style="left:917px;top:802px;width:114px;height:52px;background:#FCF1D5;"></div>
<div class="a" style="left:1031px;top:802px;width:88px;height:52px;background:#FFFFFF;"></div>
<div class="a" style="left:1119px;top:802px;width:105px;height:52px;background:#FCE4D6;"></div>
<div class="a" style="left:1224px;top:802px;width:385px;height:52px;background:#FFFFFF;"></div>
<div class="a" style="left:1609px;top:802px;width:123px;height:52px;background:#FFFFFF;"></div>
<div class="a" style="left:1732px;top:802px;width:162px;height:52px;background:#FFFFFF;"></div>
<div class="a" style="left:1890px;top:802px;width:4px;height:52px;background:#EEF3FB;"></div>
<div class="a" style="left:34px;top:854px;width:1860px;height:1px;background:#D0D6DE;"></div>
<div class="t" style="left:37px;top:821.5px;font-size:16px;color:#000">Pulverizer L</div>
<div class="t" style="right:1602px;top:820.5px;font-size:16px;color:#1010F5">7.1</div>
<div class="t" style="right:1514px;top:820.5px;font-size:16px;color:#1010F5">90.0</div>
<div class="t" style="right:1400px;top:820.5px;font-size:16px;color:#1010F5">18,100</div>
<div class="t" style="right:1304px;top:820.5px;font-size:16px;color:#1010F5">4</div>
<div class="t" style="right:1208px;top:820.5px;font-size:16px;color:#1010F5">20</div>
<div class="t" style="right:1112px;top:821.5px;font-size:16px;color:#000">63.7%</div>
<div class="t" style="right:1007px;top:821.5px;font-size:16px;color:#000">1,174</div>
<div class="t" style="right:893px;top:821.5px;font-size:16px;color:#000">0.534</div>
<div class="t" style="right:805px;top:821.5px;font-size:16px;color:#000">4</div>
<div class="t" style="left:1123px;top:821.5px;font-size:16px;color:#000;transform:scaleX(0.9);transform-origin:0 0">AMBER</div>
<div class="t" style="left:1228px;top:808.1px;font-size:16.4px;color:#000">Plan maintenance this week and close overdue</div>
<div class="t" style="left:1228px;top:833.1px;font-size:16.4px;color:#000">work order</div>
<div class="t" style="left:1613px;top:821.5px;font-size:16px;color:#000;letter-spacing:0.5px">Moderate</div>
<div class="t" style="left:1736px;top:821.5px;font-size:16px;color:#000">Reliability Engineer</div>
<div class="a" style="left:34px;top:855px;width:192px;height:52px;background:#F9FBFD;"></div>
<div class="a" style="left:226px;top:855px;width:96px;height:52px;background:#EDF4FE;"></div>
<div class="a" style="left:322px;top:855px;width:88px;height:52px;background:#EDF4FE;"></div>
<div class="a" style="left:410px;top:855px;width:114px;height:52px;background:#EDF4FE;"></div>
<div class="a" style="left:524px;top:855px;width:96px;height:52px;background:#EDF4FE;"></div>
<div class="a" style="left:620px;top:855px;width:96px;height:52px;background:#EDF4FE;"></div>
<div class="a" style="left:716px;top:855px;width:96px;height:52px;background:#F9FBFD;"></div>
<div class="a" style="left:812px;top:855px;width:105px;height:52px;background:#F9FBFD;"></div>
<div class="a" style="left:917px;top:855px;width:114px;height:52px;background:#F2F1D6;"></div>
<div class="a" style="left:1031px;top:855px;width:88px;height:52px;background:#F9FBFD;"></div>
<div class="a" style="left:1119px;top:855px;width:105px;height:52px;background:#FCE4D6;"></div>
<div class="a" style="left:1224px;top:855px;width:385px;height:52px;background:#F9FBFD;"></div>
<div class="a" style="left:1609px;top:855px;width:123px;height:52px;background:#F9FBFD;"></div>
<div class="a" style="left:1732px;top:855px;width:162px;height:52px;background:#F9FBFD;"></div>
<div class="a" style="left:1890px;top:855px;width:4px;height:52px;background:#EEF3FB;"></div>
<div class="a" style="left:34px;top:907px;width:1860px;height:1px;background:#D0D6DE;"></div>
<div class="t" style="left:37px;top:874.5px;font-size:16px;color:#000">Blower M</div>
<div class="t" style="right:1602px;top:873.5px;font-size:16px;color:#1010F5">4.9</div>
<div class="t" style="right:1514px;top:873.5px;font-size:16px;color:#1010F5">77.0</div>
<div class="t" style="right:1400px;top:873.5px;font-size:16px;color:#1010F5">13,300</div>
<div class="t" style="right:1304px;top:873.5px;font-size:16px;color:#1010F5">3</div>
<div class="t" style="right:1208px;top:873.5px;font-size:16px;color:#1010F5">6</div>
<div class="t" style="right:1112px;top:874.5px;font-size:16px;color:#000">40.7%</div>
<div class="t" style="right:1007px;top:874.5px;font-size:16px;color:#000">5,065</div>
<div class="t" style="right:893px;top:874.5px;font-size:16px;color:#000">0.303</div>
<div class="t" style="right:805px;top:874.5px;font-size:16px;color:#000">15</div>
<div class="t" style="left:1123px;top:874.5px;font-size:16px;color:#000;transform:scaleX(0.9);transform-origin:0 0">AMBER</div>
<div class="t" style="left:1228px;top:861.1px;font-size:16.4px;color:#000">Increase monitoring frequency and inspect</div>
<div class="t" style="left:1228px;top:886.1px;font-size:16.4px;color:#000">lubrication/alignment</div>
<div class="t" style="left:1613px;top:874.5px;font-size:16px;color:#000;letter-spacing:0.5px">Moderate</div>
<div class="t" style="left:1736px;top:874.5px;font-size:16px;color:#000">Mechanical Lead</div>
<div class="a" style="left:1251px;top:445px;width:42px;height:24px;background:#FFFFE1;border:1px solid #666666"></div>
<div class="t" style="left:1254px;top:451px;font-size:14px;color:#000">Close</div>
<div class="a" style="left:1894px;top:0px;width:1px;height:907px;background:#ABABAB;"></div>
<div class="a" style="left:1895px;top:0px;width:26px;height:907px;background:#F0F0F0;"></div>
<div class="a" style="left:1894px;top:0px;width:27px;height:6px;background:#E6E6E6;"></div>
<div class="a" style="left:1919px;top:0px;width:2px;height:966px;background:#D9D9D9;"></div>
<div class="a" style="left:1898px;top:8px;width:19px;height:19px;background:#FFFFFF;border:1px solid #A0A0A0"></div>
<svg class="a" style="left:1898px;top:8px" width="19" height="19"><polygon points="5,11.5 14,11.5 9.5,6" fill="#222"/></svg>
<div class="a" style="left:1898px;top:27px;width:19px;height:491px;background:#FFFFFF;border:1px solid #A0A0A0"></div>
<div class="a" style="left:1898px;top:888px;width:19px;height:19px;background:#FFFFFF;border:1px solid #A0A0A0"></div>
<svg class="a" style="left:1898px;top:888px" width="19" height="19"><polygon points="5,8.5 14,8.5 9.5,13" fill="#222"/></svg>
<div class="a" style="left:0px;top:906px;width:1921px;height:1px;background:#BDBDBD;"></div>
<div class="a" style="left:0px;top:907px;width:1919px;height:31px;background:#E6E6E6;"></div>
<svg class="a" style="left:0;top:907px" width="112" height="31"><polygon points="35,11 35,20 30,15.5" fill="#C4C4C4"/><polygon points="62,11 62,20 67,15.5" fill="#1D6E42"/></svg>
<div class="a" style="left:112px;top:910px;width:1px;height:24px;background:#A8A8A8;"></div>
<div class="a" style="left:115px;top:909px;width:188px;height:26px;background:#17365D;"></div>
<div class="t" style="left:115px;width:188px;text-align:center;top:913px;font-size:16.35px;color:#fff">Executive_Dashboard</div>
<div class="a" style="left:308px;top:909px;width:143px;height:26px;background:#129E9A;"></div>
<div class="t" style="left:308px;width:143px;text-align:center;top:913px;font-size:16.97px;color:#fff">Prediction_Tool</div>
<div class="a" style="left:453px;top:906px;width:137px;height:29px;background:linear-gradient(#FFFFFF 15%,#BAC6D4);border-left:1px solid #BDBDBD;border-right:1px solid #BDBDBD"></div>
<div class="a" style="left:453px;top:933px;width:137px;height:2px;background:#1D6E42;"></div>
<div class="t" style="left:453px;width:137px;text-align:center;top:912px;font-size:16.2px;font-weight:bold;color:#1D6E42">Fleet_Ranking</div>
<div class="a" style="left:592px;top:909px;width:209px;height:26px;background:#44546A;"></div>
<div class="t" style="left:592px;width:209px;text-align:center;top:913px;font-size:16.85px;color:#fff">Recommendation_Logic</div>
<div class="a" style="left:805px;top:909px;width:178px;height:26px;background:#E6E6E6;"></div>
<div class="t" style="left:805px;width:178px;text-align:center;top:913px;font-size:16.39px;color:#333">_Dashboard_Helper</div>
<div class="a" style="left:986px;top:909px;width:86px;height:26px;background:#129E9A;"></div>
<div class="a" style="left:986px;top:909px;width:86px;height:26px;overflow:hidden"><div class="t" style="left:12px;top:4px;font-size:16.4px;color:#fff">Plant_Summary</div></div>
<div class="a" style="left:305px;top:910px;width:1px;height:24px;background:#A8A8A8;"></div>
<div class="a" style="left:803px;top:910px;width:1px;height:24px;background:#A8A8A8;"></div>
<div class="a" style="left:984px;top:910px;width:1px;height:24px;background:#A8A8A8;"></div>
<svg class="a" style="left:1080px;top:920px" width="16" height="8"><rect x="2" y="3.8" width="2.4" height="2.2" fill="#0B5A2A"/><rect x="7" y="3.8" width="2.4" height="2.2" fill="#0B5A2A"/><rect x="12" y="3.8" width="2.4" height="2.2" fill="#0B5A2A"/></svg>
<svg class="a" style="left:1108px;top:911px" width="24" height="24"><circle cx="12" cy="12" r="9.6" fill="none" stroke="#777" stroke-width="1.3"/><path d="M12 7V17M7 12H17" stroke="#777" stroke-width="2"/></svg>
<svg class="a" style="left:1148px;top:913px" width="8" height="20"><rect x="2" y="3" width="3" height="3" fill="#ABABAB"/><rect x="2" y="8" width="3" height="3" fill="#ABABAB"/><rect x="2" y="13" width="3" height="3" fill="#ABABAB"/></svg>
<div class="a" style="left:1189px;top:913px;width:687px;height:19px;background:#F0F0F0;"></div>
<div class="a" style="left:1170px;top:913px;width:20px;height:19px;background:#FFFFFF;border:1px solid #A0A0A0"></div>
<svg class="a" style="left:1170px;top:913px" width="20" height="19"><polygon points="12,5 12,14 6.5,9.5" fill="#222"/></svg>
<div class="a" style="left:1189px;top:913px;width:644px;height:19px;background:#FFFFFF;border:1px solid #A0A0A0"></div>
<div class="a" style="left:1876px;top:913px;width:19px;height:19px;background:#FFFFFF;border:1px solid #A0A0A0"></div>
<svg class="a" style="left:1876px;top:913px" width="19" height="19"><polygon points="8,5 8,14 13.5,9.5" fill="#222"/></svg>
<div class="a" style="left:0px;top:938px;width:1921px;height:1px;background:#D0D0D0;"></div>
<div class="a" style="left:0px;top:939px;width:1921px;height:26px;background:#F3F3F3;"></div>
<div class="a" style="left:0px;top:965px;width:1921px;height:1px;background:#707070;"></div>
<div class="t" style="left:14px;top:946px;font-size:12.6px;color:#2a2a2a">Ready</div>
<div class="t" style="left:71px;top:946px;font-size:12.6px;color:#2a2a2a">Calculate</div>
<svg class="a" style="left:140px;top:938px" width="30" height="28"><circle cx="13.4" cy="9.3" r="3.4" fill="#555"/><rect x="18" y="7" width="7" height="3.5" fill="#555"/><rect x="11.5" y="10.5" width="13.5" height="10" fill="#fff" stroke="#555" stroke-width="1.1"/><path d="M14.2 12.4H15.8M17 12.4H19M20.2 12.4H21.9M14.2 15.5H15.8M17 15.5H19M20.2 15.5H21.9M14.2 18.3H15.8M17 18.3H19M20.2 18.3H21.9" stroke="#555" stroke-width="1.1"/><circle cx="13.4" cy="9.3" r="3.4" fill="#555"/></svg>
<svg class="a" style="left:140px;top:938px" width="72" height="28"><path d="M54.6 7.5A6.9 6.9 0 0 0 55.3 21.4" fill="none" stroke="#555" stroke-width="1.2" stroke-dasharray="3 1.6"/><path d="M56.5 6V14.2" stroke="#555" stroke-width="1.1"/><path d="M54.2 12L56.5 14.6L58.8 12" fill="none" stroke="#555" stroke-width="1.1"/><path d="M59.6 12.3H64.5" stroke="#555" stroke-width="1.1"/><path d="M62.3 10.2L64.8 12.3L62.3 14.4" fill="none" stroke="#555" stroke-width="1.1"/><path d="M58.6 16L67.7 23.7" stroke="#555" stroke-width="1.2"/><path d="M58.5 23.2L67.3 16" stroke="#555" stroke-width="1.8"/></svg>
<div class="t" style="left:211px;top:945.5px;font-size:12.75px;font-weight:bold;color:#222">Accessibility: Investigate</div>
<svg class="a" style="left:1400px;top:938px" width="30" height="28"><rect x="9" y="5.5" width="19" height="12.5" rx="1.5" fill="#555"/><rect x="13" y="20.5" width="4" height="1.2" fill="#555"/><circle cx="22.5" cy="17.5" r="5.5" fill="#F3F3F3"/><circle cx="22.5" cy="17.5" r="4" fill="#555" stroke="#555" stroke-width="1.6" stroke-dasharray="1.6 1.5"/><circle cx="22.5" cy="17.5" r="3.2" fill="#555"/><circle cx="22.5" cy="17.5" r="1.4" fill="#F3F3F3"/></svg>
<div class="t" style="left:1430px;top:946px;font-size:13px;color:#2a2a2a">Display Settings</div>
<div class="a" style="left:1547px;top:939px;width:50px;height:26px;background:#D0D0D0;"></div>
<svg class="a" style="left:1560px;top:940px" width="24" height="24"><rect x="4.5" y="4.5" width="15" height="15" fill="none" stroke="#808080" stroke-width="1.2"/><path d="M4 9.5H20M4 14.5H20M9.5 4V20M14.5 4V20" stroke="#808080" stroke-width="1.2"/></svg>
<svg class="a" style="left:1610px;top:940px" width="24" height="24"><rect x="3.8" y="4.5" width="16" height="14" fill="none" stroke="#707070" stroke-width="1.1"/><rect x="7.5" y="8" width="8.5" height="8" fill="none" stroke="#707070" stroke-width="1.1"/><path d="M9.5 10H14M9.5 12H14M9.5 14H14" stroke="#707070" stroke-width="1"/></svg>
<svg class="a" style="left:1660px;top:940px" width="24" height="24"><rect x="3.5" y="4.5" width="16" height="15" fill="none" stroke="#707070" stroke-width="1.1"/><path d="M8.5 4V12.5H14.5V4M3 12.5H8.5" fill="none" stroke="#707070" stroke-width="1.1"/></svg>
<div class="a" style="left:1703px;top:951px;width:11px;height:1px;background:#444;"></div>
<div class="a" style="left:1720px;top:951px;width:125px;height:1px;background:#555;"></div>
<div class="a" style="left:1780px;top:945px;width:6px;height:14px;background:#444;"></div>
<div class="a" style="left:1850px;top:951px;width:11px;height:1px;background:#444;"></div>
<div class="a" style="left:1855px;top:946px;width:1px;height:11px;background:#444;"></div>
<div class="t" style="left:1878px;top:946px;font-size:12.5px;color:#333">100%</div>
</body></html>
